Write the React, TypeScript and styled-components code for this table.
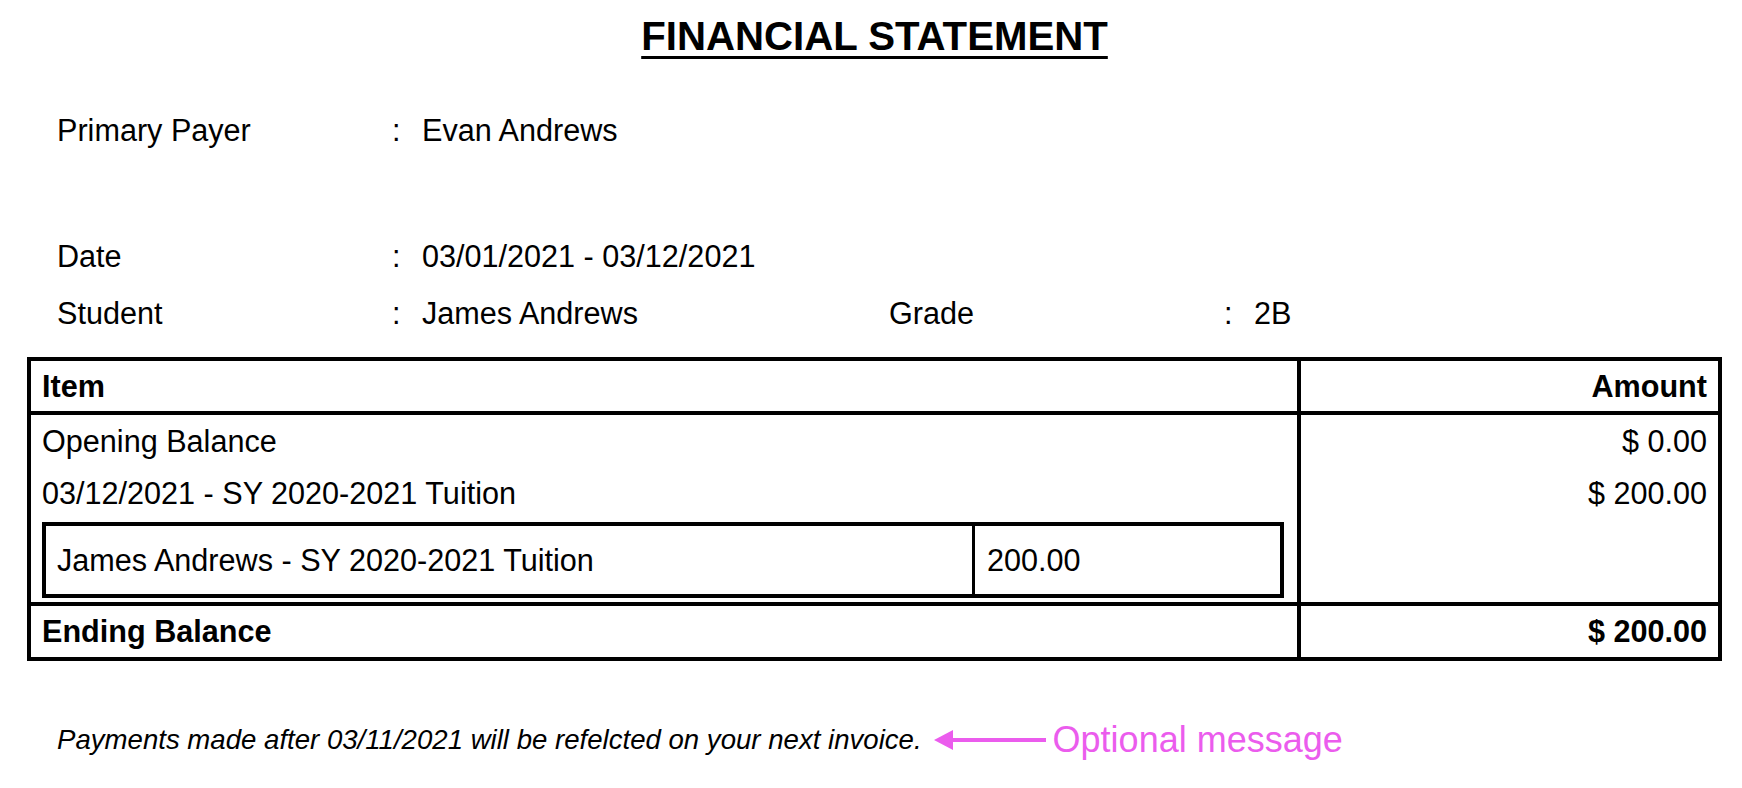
import React from "react";
import styled, { createGlobalStyle } from "styled-components";

interface InfoItem {
  label: string;
  value: string;
}

interface Line {
  item: string;
  amount: string;
}

const payer: InfoItem = { label: "Primary Payer", value: "Evan Andrews" };
const date: InfoItem = { label: "Date", value: "03/01/2021 - 03/12/2021" };
const student: InfoItem = { label: "Student", value: "James Andrews" };
const grade: InfoItem = { label: "Grade", value: "2B" };

const lines: Line[] = [
  { item: "Opening Balance", amount: "$ 0.00" },
  { item: "03/12/2021 - SY 2020-2021 Tuition", amount: "$ 200.00" },
];

const App: React.FC = () => {
  return (
    <>
      <GlobalStyle />
      <Page>
        <Title>FINANCIAL STATEMENT</Title>

        <InfoRow $gap={42}>
          <Label>{payer.label}</Label>
          <Colon>:</Colon>
          <span>{payer.value}</span>
        </InfoRow>
        <InfoRow $gap={69}>
          <Label>{date.label}</Label>
          <Colon>:</Colon>
          <span>{date.value}</span>
        </InfoRow>
        <InfoRow>
          <Label>{student.label}</Label>
          <Colon>:</Colon>
          <span>{student.value}</span>
          <Label>{grade.label}</Label>
          <Colon>:</Colon>
          <span>{grade.value}</span>
        </InfoRow>

        <Table>
          <Row $height={50} $bold>
            <ItemCell>
              <CellText>Item</CellText>
            </ItemCell>
            <AmountCell>
              <CellText $right>Amount</CellText>
            </AmountCell>
          </Row>

          <Row>
            <ItemCell>
              {lines.map((line) => (
                <BodyLine key={line.item}>{line.item}</BodyLine>
              ))}
              <DetailBox>
                <DetailName>James Andrews - SY 2020-2021 Tuition</DetailName>
                <DetailAmount>200.00</DetailAmount>
              </DetailBox>
            </ItemCell>
            <AmountCell>
              {lines.map((line) => (
                <BodyLine key={line.item} $right>
                  {line.amount}
                </BodyLine>
              ))}
            </AmountCell>
          </Row>

          <Row $height={51} $bold>
            <ItemCell>
              <CellText>Ending Balance</CellText>
            </ItemCell>
            <AmountCell>
              <CellText $right>$ 200.00</CellText>
            </AmountCell>
          </Row>
        </Table>

        <Footer>
          <Note>
            Payments made after 03/11/2021 will be refelcted on your next
            invoice.
          </Note>
          <ArrowIcon width="112" height="22" viewBox="0 0 112 22">
            <polygon points="0,11 19,1 19,21" fill="#eb5ced" />
            <rect x="17" y="9" width="95" height="4" fill="#eb5ced" />
          </ArrowIcon>
          <Callout>Optional message</Callout>
        </Footer>
      </Page>
    </>
  );
};

export default App;

//MARK: - Styled Components

const GlobalStyle = createGlobalStyle`
  body {
    margin: 0;
    background: #fff;
  }
`;

const Page = styled.main`
  padding: 14px 20px 0 27px;
  font-family: "Liberation Sans", Arial, Helvetica, sans-serif;
  color: #000;
`;

const Title = styled.h1`
  margin: 0;
  text-align: center;
  font-size: 40.2px;
  line-height: 46px;
  font-weight: 700;
  text-decoration: underline;
  text-decoration-thickness: 3px;
  text-underline-offset: 6px;
`;

const InfoRow = styled.div<{ $gap?: number }>`
  display: grid;
  grid-template-columns: 335px 30px 467px 335px 30px 1fr;
  align-items: center;
  height: 57px;
  margin-top: ${(p) => p.$gap ?? 0}px;
  padding-left: 30px;
  font-size: 30.6px;
`;

const Label = styled.span`
  white-space: nowrap;
`;

const Colon = styled.span`
  white-space: nowrap;
`;

const Table = styled.section`
  margin-top: 15px;
  border: 4px solid #000;
  font-size: 30.6px;
`;

const Row = styled.div<{ $height?: number; $bold?: boolean }>`
  display: grid;
  grid-template-columns: 1270px 1fr;
  height: ${(p) => (p.$height ? `${p.$height}px` : "auto")};
  font-weight: ${(p) => (p.$bold ? 700 : 400)};

  & + & {
    border-top: 4px solid #000;
  }
`;

const ItemCell = styled.div`
  border-right: 4px solid #000;
  display: flex;
  flex-direction: column;
`;

const AmountCell = styled.div`
  display: flex;
  flex-direction: column;
`;

const CellText = styled.div<{ $right?: boolean }>`
  flex: 1;
  display: flex;
  align-items: center;
  justify-content: ${(p) => (p.$right ? "flex-end" : "flex-start")};
  padding: 0 11px;
`;

const BodyLine = styled.div<{ $right?: boolean }>`
  height: 52px;
  line-height: 52px;
  padding: 0 11px;
  text-align: ${(p) => (p.$right ? "right" : "left")};
`;

const DetailBox = styled.div`
  box-sizing: border-box;
  display: grid;
  grid-template-columns: 929px 1fr;
  height: 76px;
  margin: 3px 13px 4px 11px;
  border: 4px solid #000;
`;

const DetailName = styled.div`
  display: flex;
  align-items: center;
  padding-left: 11px;
  border-right: 3px solid #000;
`;

const DetailAmount = styled.div`
  display: flex;
  align-items: center;
  padding-left: 12px;
`;

const Footer = styled.footer`
  display: flex;
  align-items: center;
  height: 40px;
  margin-top: 59px;
  padding-left: 30px;
`;

const Note = styled.p`
  margin: 0;
  font-size: 27.6px;
  font-style: italic;
  white-space: nowrap;
`;

const ArrowIcon = styled.svg`
  flex: none;
  margin-left: 12px;
`;

const Callout = styled.span`
  margin-left: 7px;
  font-size: 36px;
  color: #eb5ced;
  white-space: nowrap;
`;
